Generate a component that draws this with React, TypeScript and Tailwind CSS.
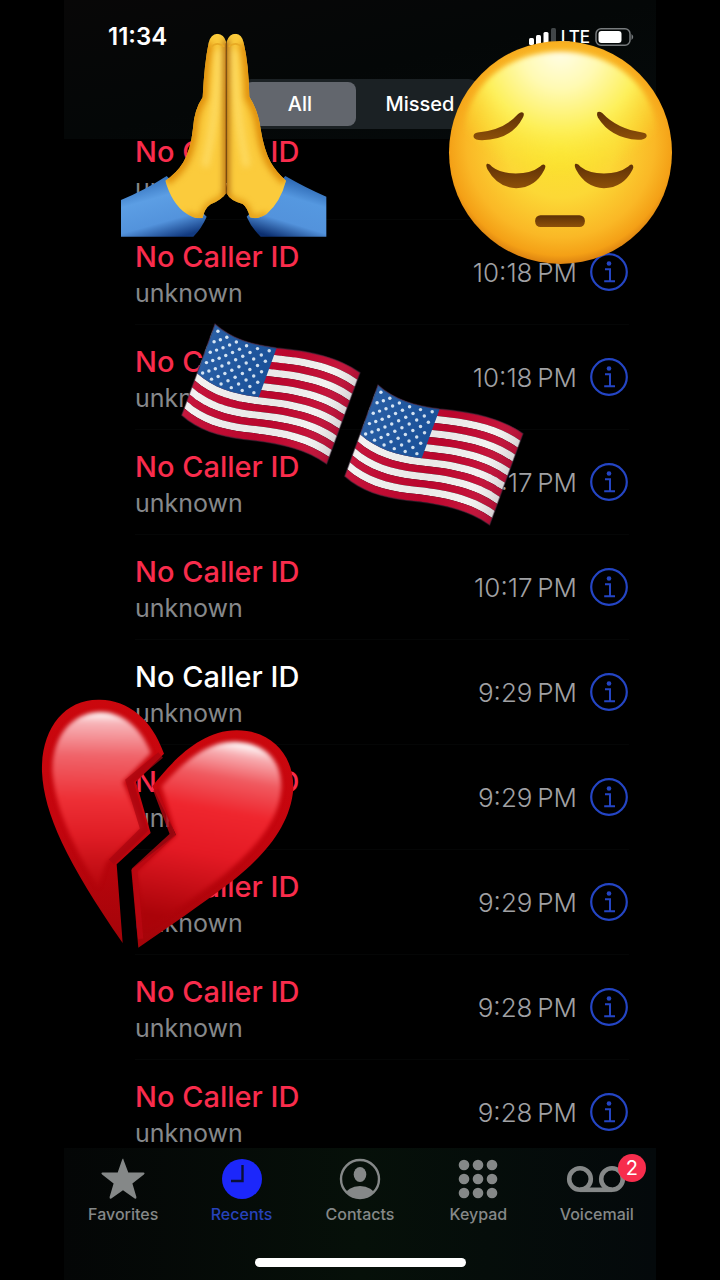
import * as React from 'react';

type Point = [number, number];

interface Call {
  time: string;
  missed: boolean;
}

const CALLS: Call[] = [
  { time: '10:18', missed: true },
  { time: '10:18', missed: true },
  { time: '10:18', missed: true },
  { time: '10:17', missed: true },
  { time: '10:17', missed: true },
  { time: '9:29', missed: false },
  { time: '9:29', missed: true },
  { time: '9:29', missed: true },
  { time: '9:28', missed: true },
  { time: '9:28', missed: true },
];

export default function App() {
  return (
    <div className="min-h-screen bg-black font-['Inter','Liberation_Sans',sans-serif] text-white">
      <div className="relative mx-16 flex min-h-screen flex-col overflow-hidden">
        <Header />
        <main className="-mt-6 -mb-[17px] flex-1">
          <ul>
            {CALLS.map((call, i) => (
              <CallRow key={i} call={call} />
            ))}
          </ul>
        </main>
        <TabBar />
      </div>
      <Stickers />
    </div>
  );
}

function Header() {
  const [filter, setFilter] = React.useState('All');

  return (
    <header className="relative z-10 h-[139px] bg-linear-to-br from-[#080707] via-[#040707] to-[#060b0c]">
      <div className="flex items-center justify-between pt-[22px] pr-[22px] pl-11">
        <span className="text-[24px] leading-[30px] font-semibold">11:34</span>
        <div className="flex items-center gap-1">
          <SignalIcon />
          <span className="text-[17px] leading-[30px] font-medium">LTE</span>
          <BatteryIcon />
        </div>
      </div>
      <div className="mx-auto mt-[27px] grid w-[238px] grid-cols-2 gap-2 rounded-[10px] bg-[#1b2124] p-[3px]">
        {['All', 'Missed'].map((name) => (
          <button
            key={name}
            type="button"
            aria-pressed={filter === name}
            onClick={() => setFilter(name)}
            className={`h-11 rounded-lg text-[20px] font-medium ${filter === name ? 'bg-[#62666d]' : ''}`}
          >
            {name}
          </button>
        ))}
      </div>
    </header>
  );
}

function CallRow({ call }: { call: Call }) {
  return (
    <li className="flex h-[105px] items-center justify-between pr-[27px] pl-[71px]">
      <div className="flex h-full flex-1 flex-col justify-center border-b border-[#050606] pt-[5px]">
        <span
          className={`text-[29px] leading-9 font-medium ${call.missed ? 'text-[#f92c4c]' : 'text-white'}`}
        >
          No Caller ID
        </span>
        <span className="text-[25px] leading-9 text-[#86888b]">unknown</span>
      </div>
      <div className="flex h-full items-center gap-3 border-b border-[#050606]">
        <time className="text-[26px] font-light text-[#a0a1a4]">{call.time}{'\u202f'}PM</time>
        <button type="button" aria-label="Call details">
          <InfoIcon />
        </button>
      </div>
    </li>
  );
}

function TabBar() {
  return (
    <nav className="relative z-10 h-[132px] bg-linear-to-r from-[#040606] via-[#061009] to-[#04090b]">
      <div className="grid grid-cols-5 pt-2">
        <Tab label="Favorites">
          <path
            d="M22 2.5 27.3 16.6H42.5Q44.4 17 42.9 18.6L31.4 27.4 35.4 41Q35.7 43.2 33.7 42.5L22 34.3 10.3 42.5Q8.3 43.2 8.6 41L12.6 27.4 1.1 18.6Q-.4 17 1.5 16.6H16.7L21 4Q22 1 23 4Z"
            fill="currentColor"
          />
        </Tab>
        <Tab label="Recents" active>
          <circle cx="22" cy="23" r="20" fill="#1c27fb" />
          <path d="M22.5 9V25H11" fill="none" stroke="#0a1038" strokeWidth="2.4" />
        </Tab>
        <Tab label="Contacts">
          <clipPath id="avatar">
            <circle cx="22" cy="23" r="19" />
          </clipPath>
          <circle cx="22" cy="23" r="19" fill="none" stroke="currentColor" strokeWidth="2.4" />
          <g clipPath="url(#avatar)" fill="currentColor">
            <ellipse cx="22" cy="18.5" rx="6.3" ry="7.5" />
            <ellipse cx="22" cy="39" rx="14.5" ry="9" />
          </g>
        </Tab>
        <Tab label="Keypad">
          {[9, 23, 37].map((y) =>
            [8, 22, 36].map((x) => (
              <circle key={`${x}-${y}`} cx={x} cy={y} r="5.3" fill="currentColor" />
            )),
          )}
        </Tab>
        <Tab label="Voicemail" badge="2">
          <g fill="none" stroke="currentColor" strokeWidth="4.6">
            <circle cx="5" cy="23" r="10.8" />
            <circle cx="37" cy="23" r="10.8" />
            <path d="M5 33.800H37" />
          </g>
        </Tab>
      </div>
      <div className="mx-auto mt-8 h-[9px] w-[211px] rounded-full bg-white" />
    </nav>
  );
}

interface TabProps {
  label: string;
  active?: boolean;
  badge?: string;
  children: React.ReactNode;
}

function Tab({ label, active, badge, children }: TabProps) {
  return (
    <button
      type="button"
      className={`flex flex-col items-center ${active ? 'text-[#2742ba]' : 'text-[#858888]'}`}
    >
      <span className="relative">
        <svg viewBox="0 0 44 46" className="h-[46px] w-11 overflow-visible" aria-hidden>
          {children}
        </svg>
        {badge && (
          <span className="absolute -top-[2px] -right-[27px] flex size-7 items-center justify-center rounded-full bg-[#f72d4d] text-[20px] text-white">
            {badge}
          </span>
        )}
      </span>
      <span className="text-[16px] leading-6 font-medium">{label}</span>
    </button>
  );
}

function SignalIcon() {
  return (
    <svg viewBox="0 0 28 18" className="h-[18px] w-7" aria-hidden>
      <g fill="#fff">
        <rect x="0" y="10" width="5" height="7" rx="1.5" />
        <rect x="7" y="7" width="5" height="10" rx="1.5" />
        <rect x="14.500" y="4" width="5" height="13" rx="1.5" />
        <rect x="22" y="0" width="5" height="17" rx="1.5" fill="#414648" />
      </g>
    </svg>
  );
}

function BatteryIcon() {
  return (
    <svg viewBox="0 0 40 20" className="h-5 w-10" aria-hidden>
      <rect x="2" y="1.700" width="34" height="16.500" rx="5" fill="none" stroke="#777b7d" strokeWidth="1.5" />
      <rect x="4.500" y="4" width="23" height="12" rx="3" fill="#fff" />
      <path d="M37.500 7Q41 10 37.500 13Z" fill="#777b7d" />
    </svg>
  );
}

function InfoIcon() {
  return (
    <svg viewBox="0 0 40 40" className="size-10" fill="none" stroke="#2445c4" aria-hidden>
      <circle cx="20" cy="20" r="17.800" strokeWidth="2.2" />
      <circle cx="20" cy="11.500" r="2.300" fill="#2445c4" stroke="none" />
      <path d="M16 17.300H21V29M15.200 29.300H26" strokeWidth="2" />
    </svg>
  );
}

// Emoji stickers dropped over the call list, measured from the centre line.
function Stickers() {
  return (
    <div className="pointer-events-none absolute top-0 left-1/2 z-20" aria-hidden>
      <PrayingHands className="absolute top-[30px] -left-[240px] h-[208px] w-[207px] max-w-none" />
      <PensiveFace className="absolute top-[39px] left-[87px] size-[227px] max-w-none" />
      <Flag className="absolute top-[320px] -left-[180px] h-[150px] w-[184px] max-w-none" />
      <Flag className="absolute top-[381px] -left-[17px] h-[150px] w-[184px] max-w-none" />
      <BrokenHeart className="absolute top-[697px] -left-[320px] h-[252px] w-[255px] max-w-none" />
    </div>
  );
}

function PrayingHands({ className }: { className: string }) {
  return (
    <svg viewBox="180 90 621 624" className={className}>
      <defs>
        <linearGradient id="sleeveLeft" x1="0.3" y1="0" x2="0.7" y2="1">
          <stop offset="0" stopColor="#2b68b4" />
          <stop offset=".35" stopColor="#5c9ee4" />
          <stop offset=".72" stopColor="#5393dc" />
          <stop offset="1" stopColor="#123a80" />
        </linearGradient>
        <linearGradient id="sleeveRight" x1="0.7" y1="0" x2="0.3" y2="1">
          <stop offset="0" stopColor="#1f58a4" />
          <stop offset=".35" stopColor="#5598e0" />
          <stop offset=".72" stopColor="#5393dc" />
          <stop offset="1" stopColor="#0c2f70" />
        </linearGradient>
        <clipPath id="handsClip">
          <path d="M446 128Q452 102 472 101Q492 102 498 125V580Q485 600 452 613Q434 625 428 653Q408 660 378 640Q335 610 316 542Q350 520 370 487Q392 450 399 385Q402 330 428 292Q433 190 446 128Z" />
          <path d="M500 125Q507 101 527 101Q546 103 551 128Q566 190 568 290Q594 330 602 388Q612 450 632 487Q650 518 678 542Q662 605 620 642Q592 660 570 652Q562 622 548 612Q510 602 500 580Z" />
        </clipPath>
        <filter id="handBlur" x="-50%" y="-20%" width="200%" height="140%" colorInterpolationFilters="sRGB">
          <feGaussianBlur stdDeviation="9" />
        </filter>
      </defs>
      <path d="M183 600Q255 570 320 528L440 650Q425 685 400 710H183Z" fill="url(#sleeveLeft)" />
      <path d="M799 590Q740 565 676 528L560 650Q575 685 602 710H799Z" fill="url(#sleeveRight)" />
      <g clipPath="url(#handsClip)">
        <rect x="300" y="90" width="400" height="580" fill="#fbcb3c" />
        <g fill="none" filter="url(#handBlur)">
          <path
            d="M446 128Q433 190 428 292Q402 330 399 385Q392 450 370 487Q350 520 316 542"
            stroke="#e0900c"
            strokeWidth="30"
          />
          <path
            d="M551 128Q566 190 568 290Q594 330 602 388Q612 450 632 487Q650 518 678 542"
            stroke="#e0900c"
            strokeWidth="30"
          />
          <path
            d="M378 645Q408 660 428 653Q434 625 452 613Q485 600 498 580M622 645Q592 660 570 652Q562 622 548 612Q510 602 500 580"
            stroke="#e39a14"
            strokeWidth="20"
          />
          <path d="M474 150Q475 330 435 500M522 150Q525 330 560 500" stroke="#fdd95e" strokeWidth="24" />
          <path d="M499 120V585" stroke="#a8600c" strokeWidth="16" />
        </g>
        <path d="M499 130V584" stroke="#a0560c" strokeWidth="5" />
        <path
          d="M452 142Q471 122 493 140M506 140Q527 122 547 142"
          fill="none"
          stroke="#e8aa24"
          strokeWidth="5"
        />
      </g>
    </svg>
  );
}

function PensiveFace({ className }: { className: string }) {
  return (
    <svg viewBox="170 117 680 680" className={className}>
      <defs>
        <radialGradient id="faceBase" cx=".5" cy=".46" r=".54">
          <stop offset="0" stopColor="#fbe52c" />
          <stop offset=".45" stopColor="#fcd836" />
          <stop offset=".78" stopColor="#fab826" />
          <stop offset=".93" stopColor="#f4a016" />
          <stop offset="1" stopColor="#dc8210" />
        </radialGradient>
        <radialGradient id="faceShine" gradientUnits="userSpaceOnUse" cx="510" cy="150" r="380">
          <stop offset="0" stopColor="#fffde8" />
          <stop offset=".3" stopColor="#fffab4" />
          <stop offset=".62" stopColor="#fdf05c" />
          <stop offset="1" stopColor="#fbe52c" stopOpacity="0" />
        </radialGradient>
        <linearGradient id="feature" x1="0" y1="0" x2="0" y2="1">
          <stop offset="0" stopColor="#5e3006" />
          <stop offset="1" stopColor="#8d5009" />
        </linearGradient>
        <filter id="faceBlur" colorInterpolationFilters="sRGB">
          <feGaussianBlur stdDeviation="8" />
        </filter>
      </defs>
      <circle cx="510" cy="457" r="334" fill="url(#faceBase)" />
      <path
        d="M222 385C240 240 370 155 510 155S780 240 798 385C790 480 680 520 510 530S230 480 222 385Z"
        fill="url(#faceShine)"
        filter="url(#faceBlur)"
      />
      <g fill="url(#feature)">
        <path d="M399 339Q393 333 383 342Q340 390 262 397Q247 400 250 411Q253 420 275 420Q364 418 397 353Q402 344 399 339Z" />
        <path d="M620 337Q626 332 635 339Q680 387 755 397Q770 399 768 409Q764 419 742 419Q660 414 622 352Q618 343 620 337Z" />
        <path d="M290 491Q297 489 305 500Q330 520 376 520T449 499Q458 489 464 496Q466 500 462 508Q435 563 377 564Q321 562 291 507Q285 495 290 491Z" />
        <path d="M555 491Q562 489 570 500Q595 520 640 520T713 499Q722 489 727 496Q730 500 726 508Q698 563 640 564Q585 562 556 507Q550 495 555 491Z" />
        <rect x="434" y="645" width="149" height="35" rx="16" />
      </g>
    </svg>
  );
}

function BrokenHeart({ className }: { className: string }) {
  const left =
    'M432 220C395 115 325 60 240 58C130 55 62 150 66 275C72 400 140 545 308 788L290 552L392 458L348 305Z';
  const right =
    'M397 318C455 245 540 150 650 150C755 150 822 225 820 325C812 430 740 520 640 600C540 675 440 745 355 802L334 568L468 463Z';
  return (
    <svg viewBox="60 50 765 756" className={className}>
      <defs>
        <linearGradient id="heartRim" x1="0" y1="0" x2="0" y2="1">
          <stop offset="0" stopColor="#cb070d" />
          <stop offset=".5" stopColor="#c4050e" />
          <stop offset="1" stopColor="#a30409" />
        </linearGradient>
        <linearGradient id="heartLeft" gradientUnits="userSpaceOnUse" x1="240" y1="95" x2="230" y2="640">
          <stop offset="0" stopColor="#fff" />
          <stop offset=".06" stopColor="#f7b4b8" />
          <stop offset=".24" stopColor="#f0646a" />
          <stop offset=".48" stopColor="#ee3036" />
          <stop offset=".68" stopColor="#e01d25" />
          <stop offset="1" stopColor="#b0040a" />
        </linearGradient>
        <linearGradient id="heartRight" gradientUnits="userSpaceOnUse" x1="640" y1="184" x2="540" y2="730">
          <stop offset="0" stopColor="#fff" />
          <stop offset=".07" stopColor="#f7acb0" />
          <stop offset=".2" stopColor="#f05a60" />
          <stop offset=".38" stopColor="#ef262e" />
          <stop offset=".62" stopColor="#e41a24" />
          <stop offset="1" stopColor="#aa0309" />
        </linearGradient>
        <filter id="heartBlur" colorInterpolationFilters="sRGB">
          <feGaussianBlur stdDeviation="6" />
        </filter>
      </defs>
      <path d={left} fill="url(#heartRim)" />
      <path d={right} fill="url(#heartRim)" />
      <g filter="url(#heartBlur)">
        <path
          d="M393 218C358 132 300 95 240 95C145 98 97 180 97 270C104 380 160 500 235 620L258 545L368 440L308 305Z"
          fill="url(#heartLeft)"
        />
        <path
          d="M425 318C490 245 560 183 645 184C735 187 786 240 784 325C778 420 705 505 610 585C520 655 450 700 375 745L350 575L470 465Z"
          fill="url(#heartRight)"
        />
      </g>
      <path d="M422 224L328 302L372 448L274 545" fill="none" stroke="#a80510" strokeWidth="22" opacity=".7" />
      <path d="M407 328L458 463L344 568L362 775" fill="none" stroke="#b90812" strokeWidth="16" opacity=".8" />
    </svg>
  );
}

// Upper edge of the flag: two cubic segments, the first as wide as the canton.
const ORIGIN: Point = [135, 42];
const SWEEP: Point = [-100, 274];
const CANTON: Point[] = [[0, 0], [50, 45], [110, 62], [185, 72]];
const FLY: Point[] = [[185, 72], [290, 82], [370, 100], [435, 146]];

const place = ([x, y]: Point, v: number) =>
  `${(ORIGIN[0] + x + SWEEP[0] * v).toFixed(1)} ${(ORIGIN[1] + y + SWEEP[1] * v).toFixed(1)}`;

function band(from: number, to: number, whole: boolean) {
  const top = [...CANTON, ...(whole ? FLY.slice(1) : [])];
  const path = (pts: Point[], v: number) => {
    const p = pts.map((pt) => place(pt, v));
    const tail = p.length > 4 ? `C${p[4]} ${p[5]} ${p[6]}` : '';
    return `${p[0]}C${p[1]} ${p[2]} ${p[3]}${tail}`;
  };
  return `M${path(top, from)}L${path([...top].reverse(), to)}Z`;
}

function starAt(u: number, v: number): Point {
  const w = [(1 - u) ** 3, 3 * u * (1 - u) ** 2, 3 * u * u * (1 - u), u ** 3];
  const sum = (axis: 0 | 1) => CANTON.reduce((acc, p, i) => acc + p[axis] * w[i], 0);
  return [ORIGIN[0] + sum(0) + SWEEP[0] * v, ORIGIN[1] + sum(1) + SWEEP[1] * v];
}

const STARS = Array.from({ length: 9 }).flatMap((_, row) =>
  Array.from({ length: row % 2 ? 5 : 6 }).map((__, col) =>
    starAt((col + (row % 2 ? 1 : 0.5)) / 6, ((row + 0.7) / 9.4) * (7 / 13)),
  ),
);

function Flag({ className }: { className: string }) {
  const id = React.useId();
  return (
    <svg viewBox="30 30 552 450" className={className}>
      <defs>
        <linearGradient id={id} x1="0" y1="0.2" x2="1" y2="0.5">
          <stop offset="0" stopColor="#20001a" stopOpacity=".25" />
          <stop offset=".15" stopColor="#fff" stopOpacity=".06" />
          <stop offset=".55" stopColor="#000" stopOpacity=".04" />
          <stop offset=".8" stopColor="#fff" stopOpacity=".05" />
          <stop offset="1" stopColor="#20001a" stopOpacity=".2" />
        </linearGradient>
      </defs>
      {Array.from({ length: 13 }).map((_, i) => (
        <path key={i} d={band(i / 13, (i + 1) / 13, true)} fill={i % 2 ? '#f4f2f1' : '#c2062f'} />
      ))}
      <path d={band(0, 7 / 13, false)} fill="#1a539e" />
      {STARS.map(([x, y], i) => (
        <circle key={i} cx={x} cy={y} r="5.200" fill="#d5e5f5" />
      ))}
      <path d={band(0, 1, true)} fill={`url(#${id})`} stroke="#3b2a3b" strokeOpacity=".5" strokeWidth="4" />
    </svg>
  );
}
